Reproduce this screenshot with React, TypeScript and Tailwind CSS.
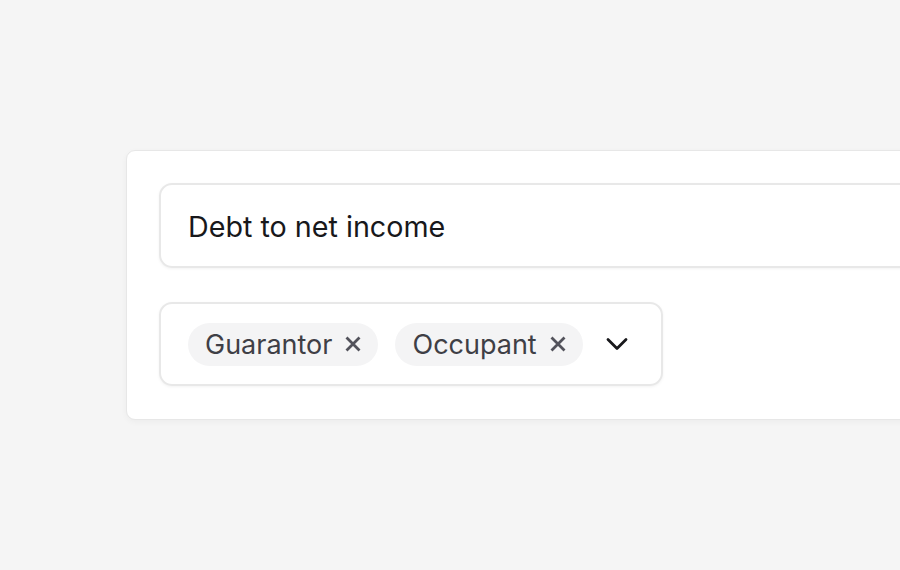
import React from "react";

function XIcon() {
  return (
    <svg width="16" height="16" viewBox="0 0 16 16" fill="none" stroke="#52525b" strokeWidth="2.8" strokeLinecap="butt">
      <path d="M1.5 1.5L14.5 14.5M14.5 1.5L1.5 14.5" />
    </svg>
  );
}

function Chevron() {
  return (
    <svg width="22" height="15" viewBox="0 0 22 15" fill="none" stroke="#18181b" strokeWidth="2.8" strokeLinecap="round" strokeLinejoin="round">
      <path d="M2 2.5L11 11.5L20 2.5" />
    </svg>
  );
}

function Chip({ label }: { label: string }) {
  return (
    <div className="flex items-center gap-[13px] h-[43px] pl-[17px] pr-[17px] rounded-full bg-[#f4f4f5] text-[#3f3f46] text-[27px]">
      <span className="pt-[3px]">{label}</span>
      <XIcon />
    </div>
  );
}

export default function App() {
  return (
    <div className="w-[900px] h-[570px] bg-[#f5f5f5] overflow-hidden pt-[150px] pl-[126px]" style={{ fontFamily: "Inter, 'Liberation Sans', sans-serif" }}>
      <div className="w-[900px] bg-white border border-[#e7e7e7] rounded-[9px] shadow-[0_2px_6px_rgba(0,0,0,0.04)] pt-[32px] px-[32px] pb-[33px] flex flex-col gap-[34px]">
        <div className="h-[85px] w-[860px] rounded-[13px] border-2 border-[#e8e8e8] shadow-[0_1px_3px_rgba(0,0,0,0.05)] flex items-center pl-[27px] pt-[2px] text-[28.7px] text-[#18181b]">
          Debt to net income
        </div>
        <div className="h-[84px] w-[504px] rounded-[13px] border-2 border-[#e8e8e8] shadow-[0_1px_3px_rgba(0,0,0,0.05)] flex items-center pl-[27px] gap-[17px]">
          <Chip label="Guarantor" />
          <Chip label="Occupant" />
          <div className="ml-[6px]"><Chevron /></div>
        </div>
      </div>
    </div>
  );
}
